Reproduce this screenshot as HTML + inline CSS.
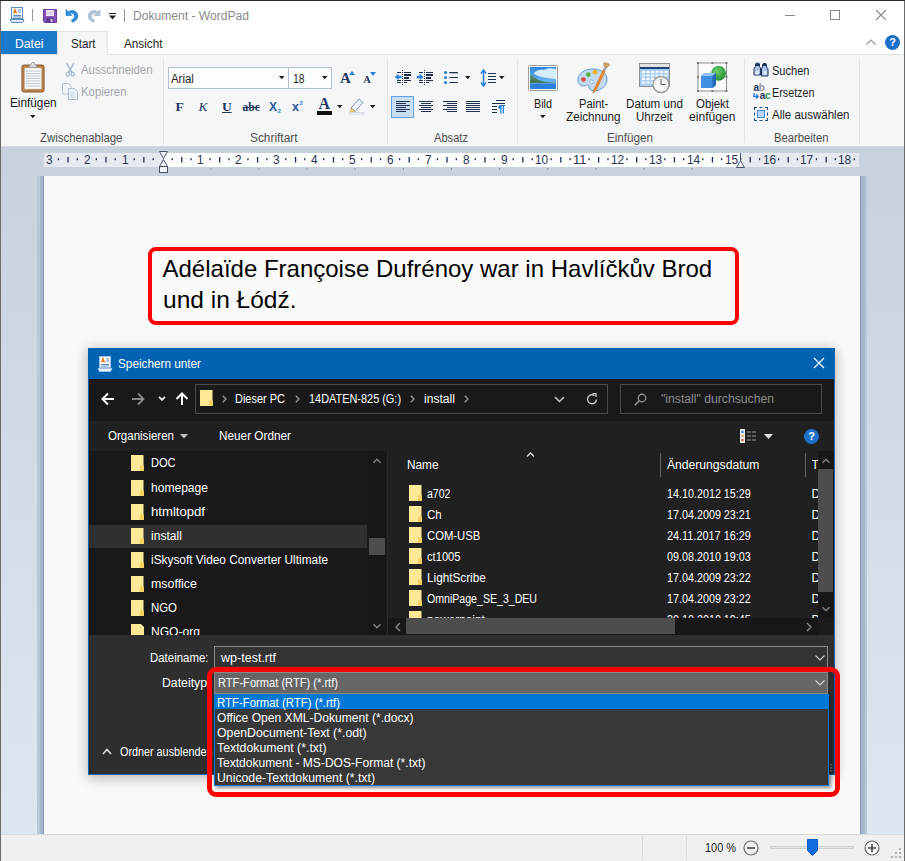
<!DOCTYPE html>
<html lang="de">
<head>
<meta charset="utf-8">
<title>Dokument - WordPad</title>
<style>
html,body{margin:0;padding:0;}
body{width:905px;height:861px;overflow:hidden;background:#fff;font-family:"Liberation Sans",sans-serif;font-size:12px;color:#1e1e1e;}
#w{position:relative;width:905px;height:861px;overflow:hidden;background:#fff;}
#w div,#w span,#w svg{position:absolute;}
.t{white-space:nowrap;line-height:1;}
.tb{left:1px;top:1px;width:903px;height:30px;background:#fff;}
.tabs{left:1px;top:31px;width:903px;height:23px;background:#fff;border-bottom:1px solid #e0e1e3;}
.rib{left:1px;top:55px;width:903px;height:91px;background:#f5f6f7;border-bottom:1px solid #d6d9dd;}
.sep{width:1px;background:#e4e5e7;top:58px;height:85px;}
.ws{left:1px;top:147px;width:903px;height:687px;background:linear-gradient(180deg,#c8d1dd 0%,#d2dde9 52%,#dce7f1 100%);}
.ruler{left:44px;top:153px;width:815px;height:14px;background:#e6eaf0;}
.ruler .in{left:119px;top:0;width:577px;height:14px;background:#fcfcfd;}
.page{left:44px;top:176px;width:816px;height:658px;background:#fafafa;box-sizing:border-box;border-left:1px solid #fff;border-right:1px solid #fff;}
.sb{left:1px;top:834px;width:903px;height:26px;background:#f0f0f0;border-top:1px solid #d9d9d9;}
.red{border:4px solid #f00;border-radius:9px;box-sizing:border-box;}
.dlg{left:88px;top:348px;width:747px;height:427px;background:#191919;box-shadow:0 2px 12px 1px rgba(0,0,0,.28);}
.row{left:0;width:747px;}
.combo{box-sizing:border-box;border:1px solid #9a9a9a;}
</style>
</head>
<body>
<div id="w">
<div style="left:0;top:0;width:905px;height:861px;background:#6b6b6b;"></div><div style="left:0;top:0;width:905px;height:1px;background:#2b2b2b;"></div><div class="tb"></div><div class="tabs"></div><div class="rib"></div><svg style="left:9px;top:7px" width="16" height="16" viewBox="0 0 16 16">
<rect x="2.5" y="0.5" width="11" height="11" fill="#fdfdfd" stroke="#5b8fc4"/>
<path d="M1 12.5h14l-1.5 3h-11z" fill="#dfe9f5" stroke="#5b8fc4" stroke-width="1"/>
<path d="M4.5 6.5l1.5-4 1.5 4M5 5.2h2" stroke="#e8731a" stroke-width="1.2" fill="none"/>
<path d="M9 3h3M9 5h3M4 8.5h8M4 10h8" stroke="#5b8fc4" stroke-width="1"/></svg><div style="left:32px;top:9px;width:1px;height:12px;background:#9a9a9a"></div><svg style="left:43px;top:9px" width="14" height="14" viewBox="0 0 14 14">
<path d="M0.5 0.5h13v13h-12l-1-1z" fill="#8552b8" stroke="#6a3b9c"/>
<rect x="3" y="1" width="8" height="6" fill="#f3eefa"/><path d="M3.5 3h7M3.5 5h7" stroke="#c9b6e2" stroke-width="1"/>
<rect x="3.5" y="9" width="7" height="4.5" fill="#5d3590"/><rect x="7.5" y="10" width="2" height="3" fill="#d9caec"/></svg><svg style="left:65px;top:8px" width="15" height="15" viewBox="0 0 15 15">
<path d="M1 1.5v6h6l-2.2-2.2c2.2-1 4.6 0.4 4.6 2.9 0 1.8-1.2 3.2-3 3.8l1 2.3c3.200-.9 5.400-3.200 5.400-6.300 0-4.600-5.200-7-9.600-4.300z" fill="#2e8ede" stroke="#1f6fbf" stroke-width=".6"/></svg><svg style="left:86px;top:8px" width="15" height="15" viewBox="0 0 15 15">
<path d="M14 1.500v6h-6l2.200-2.200c-2.200-1-4.600 0.400-4.600 2.900 0 1.800 1.200 3.200 3 3.800l-1 2.300c-3.200-.9-5.400-3.200-5.400-6.300 0-4.600 5.200-7 9.600-4.300z" fill="#b4c3d6" stroke="#9db0c8" stroke-width=".6"/></svg><div style="left:109px;top:13px;width:7px;height:1px;background:#222"></div><svg style="left:108px;top:15px" width="9" height="5" viewBox="0 0 9 5"><path d="M1 0.500h7l-3.500 4z" fill="#222"/></svg><div style="left:124px;top:9px;width:1px;height:13px;background:#9a9a9a"></div><span class="t" style="left:132.5px;top:10.4px;font-size:12.5px;color:#8b8b8b;transform:scaleX(0.967);transform-origin:0 50%;">Dokument - WordPad</span><div style="left:785px;top:15px;width:10px;height:1px;background:#8a8a8a"></div><div style="left:830px;top:10px;width:8px;height:8px;border:1px solid #8a8a8a"></div><svg style="left:875px;top:9px" width="12" height="12" viewBox="0 0 12 12"><path d="M1 1l10 10M11 1L1 11" stroke="#8a8a8a" stroke-width="1.100"/></svg><div style="left:1px;top:31px;width:56px;height:23px;background:#1979ca"></div><div style="left:57px;top:31px;width:51px;height:24px;background:#f5f6f7;border:1px solid #e0e1e3;border-bottom:none;box-sizing:border-box"></div><span class="t" style="left:15.0px;top:37.6px;font-size:12px;color:#ffffff;transform:scaleX(1.017);transform-origin:0 50%;">Datei</span><span class="t" style="left:71.0px;top:37.6px;font-size:12px;color:#1e1e1e;transform:scaleX(0.967);transform-origin:0 50%;">Start</span><span class="t" style="left:124.0px;top:37.6px;font-size:12px;color:#1e1e1e;transform:scaleX(0.978);transform-origin:0 50%;">Ansicht</span><svg style="left:865px;top:38px" width="12" height="8" viewBox="0 0 12 8"><path d="M1.500 6.500l4.500-4.500 4.500 4.500" stroke="#9a9a9a" stroke-width="1.200" fill="none"/></svg><div style="left:884.5px;top:34.500px;width:15px;height:15px;border-radius:8px;background:#1b6fc9"></div><span class="t" style="left:889.3px;top:36.8px;font-size:11px;color:#fff;font-weight:bold;">?</span><div class="sep" style="left:163px"></div><div class="sep" style="left:387px"></div><div class="sep" style="left:517px"></div><div class="sep" style="left:744px"></div><div class="sep" style="left:859px"></div><span class="t" style="left:40.0px;top:131.6px;font-size:12px;color:#4f4f4f;transform:scaleX(0.951);transform-origin:0 50%;">Zwischenablage</span><span class="t" style="left:250.0px;top:131.6px;font-size:12px;color:#4f4f4f;transform:scaleX(0.989);transform-origin:0 50%;">Schriftart</span><span class="t" style="left:434.0px;top:131.6px;font-size:12px;color:#4f4f4f;transform:scaleX(0.927);transform-origin:0 50%;">Absatz</span><span class="t" style="left:607.0px;top:131.6px;font-size:12px;color:#4f4f4f;transform:scaleX(0.971);transform-origin:0 50%;">Einfügen</span><span class="t" style="left:773.5px;top:131.6px;font-size:12px;color:#4f4f4f;transform:scaleX(0.939);transform-origin:0 50%;">Bearbeiten</span><svg style="left:21px;top:61px" width="24" height="32" viewBox="0 0 26 32" preserveAspectRatio="none">
<rect x="1" y="4" width="24" height="27" rx="2" fill="#b98149" stroke="#8d5a2b"/>
<rect x="4" y="7" width="18" height="21" fill="#fbfbfb" stroke="#d0c8bd" stroke-width=".5"/>
<path d="M5 10h16M5 12.500h16M5 15h16M5 17.500h16M5 20h16M5 22.500h16M5 25h16" stroke="#b9c4d0" stroke-width="1"/>
<path d="M8 6.500l3-3.500 1-1.500h2l1 1.500 3 3.500z" fill="#d9dde2" stroke="#8a8f96" stroke-width=".8"/></svg><span class="t" style="left:9.5px;top:97.1px;font-size:12px;color:#1e1e1e;transform:scaleX(0.982);transform-origin:0 50%;">Einfügen</span><svg style="left:29.9px;top:115px" width="6" height="4" viewBox="0 0 6 4"><path d="M0 0h5.500l-2.750 3.300z" fill="#1a1a1a"/></svg><svg style="left:64.500px;top:62px" width="10.500" height="15" viewBox="0 0 13 16" preserveAspectRatio="none">
<path d="M2 1l7 11M11 1l-7 11" stroke="#a9bccf" stroke-width="1.800"/><circle cx="3.500" cy="13" r="2" fill="none" stroke="#a9bccf" stroke-width="1.500"/><circle cx="9.500" cy="13" r="2" fill="none" stroke="#a9bccf" stroke-width="1.500"/></svg><svg style="left:62px;top:83px" width="17" height="17" viewBox="0 0 17 17">
<path d="M0.500 0.500h6l2.500 2.500v8h-8.500z" fill="#f3f6f9" stroke="#b4c4d4"/>
<path d="M6.500 5.500h6l3 3v8h-9z" fill="#f3f6f9" stroke="#a9bccf"/><path d="M8 10h5M8 12h5M8 14h5" stroke="#c3d0dc"/></svg><span class="t" style="left:81.0px;top:64.1px;font-size:12px;color:#a3a7ad;transform:scaleX(0.948);transform-origin:0 50%;">Ausschneiden</span><span class="t" style="left:81.0px;top:86.1px;font-size:12px;color:#a3a7ad;transform:scaleX(0.947);transform-origin:0 50%;">Kopieren</span><div style="left:168px;top:67px;width:121px;height:22px;box-sizing:border-box;border:1px solid #b4c1d4;background:#fdfdfe"></div><div style="left:288px;top:67px;width:44px;height:22px;box-sizing:border-box;border:1px solid #b4c1d4;background:#fdfdfe"></div><span class="t" style="left:170.7px;top:72.5px;font-size:12px;color:#1e1e1e;transform:scaleX(0.949);transform-origin:0 50%;">Arial</span><span class="t" style="left:292.7px;top:72.5px;font-size:12px;color:#1e1e1e;transform:scaleX(0.868);transform-origin:0 50%;">18</span><svg style="left:279.2px;top:76px" width="6" height="4" viewBox="0 0 6 4"><path d="M0 0h5.500l-2.750 3.300z" fill="#1a1a1a"/></svg><svg style="left:322.2px;top:76px" width="6" height="4" viewBox="0 0 6 4"><path d="M0 0h5.500l-2.750 3.300z" fill="#1a1a1a"/></svg><span class="t" style="left:340.0px;top:71.1px;font-size:15px;color:#1f3864;font-family:'Liberation Serif',serif;font-weight:bold;">A</span><svg style="left:349px;top:71px" width="6" height="4" viewBox="0 0 6 4"><path d="M0 4h6l-3-4z" fill="#2e7fd6"/></svg><span class="t" style="left:363.3px;top:74.9px;font-size:10.5px;color:#1f3864;font-family:'Liberation Serif',serif;font-weight:bold;">A</span><svg style="left:370px;top:72px" width="6" height="4" viewBox="0 0 6 4"><path d="M0 0h6l-3 4z" fill="#2e7fd6"/></svg><span class="t" style="left:175.5px;top:100.4px;font-size:13.5px;color:#1f3864;font-family:'Liberation Serif',serif;font-weight:bold;">F</span><span class="t" style="left:198.5px;top:100.4px;font-size:13.5px;color:#1f3864;font-family:'Liberation Serif',serif;font-style:italic;">K</span><span class="t" style="left:222.0px;top:99.9px;font-size:13.5px;color:#1f3864;font-family:'Liberation Serif',serif;font-weight:bold;text-decoration:underline;">U</span><span class="t" style="left:242.5px;top:102.4px;font-size:11.5px;color:#1f3864;font-family:'Liberation Serif',serif;font-weight:bold;text-decoration:line-through;">abc</span><span class="t" style="left:269.0px;top:100.6px;font-size:12px;color:#2b5797;font-weight:bold;">X</span><span class="t" style="left:277.5px;top:107.6px;font-size:6px;color:#2e7fd6;font-weight:bold;">2</span><span class="t" style="left:292.0px;top:101.4px;font-size:12.5px;color:#2b5797;font-weight:bold;">x</span><span class="t" style="left:299.5px;top:99.6px;font-size:6px;color:#2e7fd6;font-weight:bold;">2</span><span class="t" style="left:318.5px;top:96.2px;font-size:16px;color:#1f3864;font-family:'Liberation Serif',serif;font-weight:bold;">A</span><div style="left:317px;top:111px;width:15px;height:4px;background:#111"></div><svg style="left:337px;top:104.8px" width="6" height="4" viewBox="0 0 6 4"><path d="M0 0h5.500l-2.750 3.300z" fill="#1a1a1a"/></svg><svg style="left:348px;top:97px" width="18" height="18" viewBox="0 0 18 18">
<path d="M3 11l8-9 4 3.500-8 9z" fill="#eef3f9" stroke="#7f98b5" stroke-width="1"/><path d="M3 11l4 3.500-4.500 1z" fill="#f2d36b" stroke="#b99a3a" stroke-width=".6"/>
<rect x="1" y="15.500" width="15" height="2.500" fill="#e9eef4" stroke="#c3ccd6" stroke-width=".6"/></svg><svg style="left:369.6px;top:104.8px" width="6" height="4" viewBox="0 0 6 4"><path d="M0 0h5.500l-2.750 3.300z" fill="#1a1a1a"/></svg><svg style="left:394px;top:70px" width="18" height="16" viewBox="0 0 18 16">
<g fill="#1f2f4f"><rect x="3" y="2" width="4" height="1"/><rect x="10" y="2" width="7" height="1"/><rect x="10" y="4" width="7" height="2"/><rect x="10" y="7" width="5" height="2"/>
<rect x="3" y="10" width="4" height="1"/><rect x="10" y="10" width="7" height="1"/><rect x="3" y="12" width="4" height="1"/><rect x="10" y="12" width="3" height="1"/>
<rect x="8" y="0" width="1" height="1"/><rect x="8" y="2" width="1" height="1"/><rect x="8" y="4" width="1" height="1"/><rect x="8" y="6" width="1" height="1"/><rect x="8" y="8" width="1" height="1"/><rect x="8" y="10" width="1" height="1"/><rect x="8" y="12" width="1" height="1"/><rect x="8" y="14" width="1" height="1"/></g>
<path d="M0.800 7l3.700-3.200v2h3v2.400h-3v2z" fill="#2e7fd6"/></svg><svg style="left:416px;top:70px" width="18" height="16" viewBox="0 0 18 16">
<g fill="#1f2f4f"><rect x="3" y="2" width="4" height="1"/><rect x="10" y="2" width="7" height="1"/><rect x="10" y="4" width="7" height="2"/><rect x="10" y="7" width="5" height="2"/>
<rect x="3" y="10" width="4" height="1"/><rect x="10" y="10" width="7" height="1"/><rect x="3" y="12" width="4" height="1"/><rect x="10" y="12" width="3" height="1"/>
<rect x="8" y="0" width="1" height="1"/><rect x="8" y="2" width="1" height="1"/><rect x="8" y="4" width="1" height="1"/><rect x="8" y="6" width="1" height="1"/><rect x="8" y="8" width="1" height="1"/><rect x="8" y="10" width="1" height="1"/><rect x="8" y="12" width="1" height="1"/><rect x="8" y="14" width="1" height="1"/></g>
<path d="M7.500 7l-3.700-3.200v2h-3v2.400h3v2z" fill="#2e7fd6"/></svg><svg style="left:443px;top:70px" width="16" height="15" viewBox="0 0 16 15">
<path d="M6.300 2.600h8.700M6.300 7.500h8.700M6.300 12.500h8.700" stroke="#1f2f4f" stroke-width="1.200"/>
<circle cx="2.500" cy="2.600" r="1.600" fill="#2e7fd6"/><circle cx="2.500" cy="7.500" r="1.600" fill="#2e7fd6"/><circle cx="2.500" cy="12.500" r="1.600" fill="#2e7fd6"/></svg><svg style="left:464.8px;top:76px" width="6" height="4" viewBox="0 0 6 4"><path d="M0 0h5.500l-2.750 3.300z" fill="#1a1a1a"/></svg><svg style="left:480px;top:69px" width="17" height="18" viewBox="0 0 17 18">
<g fill="#1f2f4f"><rect x="8" y="4" width="8" height="1"/><rect x="8" y="7" width="8" height="1"/><rect x="8" y="10" width="8" height="1"/><rect x="8" y="13" width="8" height="1"/></g>
<path d="M3.500 1.500v15" stroke="#1e7fe0" stroke-width="1.500"/><path d="M1 4.500l2.500-3.500 2.500 3.500M1 13.500l2.500 3.500 2.500-3.500" stroke="#1e7fe0" stroke-width="1.500" fill="none"/></svg><svg style="left:498.8px;top:76px" width="6" height="4" viewBox="0 0 6 4"><path d="M0 0h5.500l-2.750 3.300z" fill="#1a1a1a"/></svg><div style="left:391px;top:96px;width:23px;height:22px;box-sizing:border-box;border:1px solid #62a2e4;background:#c9def3"></div><svg style="left:396px;top:100px" width="14" height="14" viewBox="0 0 14 14"><rect x="0" y="1" width="14" height="1" fill="#1f2f4f"/><rect x="0" y="3" width="10" height="1" fill="#1f2f4f"/><rect x="0" y="5" width="14" height="1" fill="#1f2f4f"/><rect x="0" y="7" width="10" height="1" fill="#1f2f4f"/><rect x="0" y="9" width="14" height="1" fill="#1f2f4f"/><rect x="0" y="11" width="10" height="1" fill="#1f2f4f"/></svg><svg style="left:419px;top:100px" width="14" height="14" viewBox="0 0 14 14"><rect x="0" y="1" width="14" height="1" fill="#1f2f4f"/><rect x="2" y="3" width="10" height="1" fill="#1f2f4f"/><rect x="0" y="5" width="14" height="1" fill="#1f2f4f"/><rect x="2" y="7" width="10" height="1" fill="#1f2f4f"/><rect x="0" y="9" width="14" height="1" fill="#1f2f4f"/><rect x="2" y="11" width="10" height="1" fill="#1f2f4f"/></svg><svg style="left:443px;top:100px" width="14" height="14" viewBox="0 0 14 14"><rect x="0" y="1" width="14" height="1" fill="#1f2f4f"/><rect x="4" y="3" width="10" height="1" fill="#1f2f4f"/><rect x="0" y="5" width="14" height="1" fill="#1f2f4f"/><rect x="4" y="7" width="10" height="1" fill="#1f2f4f"/><rect x="0" y="9" width="14" height="1" fill="#1f2f4f"/><rect x="4" y="11" width="10" height="1" fill="#1f2f4f"/></svg><svg style="left:466px;top:100px" width="14" height="14" viewBox="0 0 14 14"><rect x="0" y="1" width="14" height="1" fill="#1f2f4f"/><rect x="0" y="3" width="14" height="1" fill="#1f2f4f"/><rect x="0" y="5" width="14" height="1" fill="#1f2f4f"/><rect x="0" y="7" width="14" height="1" fill="#1f2f4f"/><rect x="0" y="9" width="14" height="1" fill="#1f2f4f"/><rect x="0" y="11" width="14" height="1" fill="#1f2f4f"/></svg><svg style="left:492px;top:100px" width="14" height="14" viewBox="0 0 14 14">
<g fill="#1f2f4f"><rect x="4" y="0" width="9" height="1"/><rect x="0" y="3" width="13" height="1"/><rect x="0" y="6" width="5" height="1"/><rect x="0" y="9" width="5" height="1"/><rect x="0" y="12" width="5" height="1"/></g>
<path d="M9 5h4v1h-1v7.500h-1.300v-7.500h-1.200v7.500h-1.300v-4.500a2 2 0 0 1 0-4z" fill="#1e7fe0"/></svg><svg style="left:528px;top:65px" width="30" height="26" viewBox="0 0 30 26">
<defs><linearGradient id="sky" x1="0" y1="0" x2="0" y2="1"><stop offset="0" stop-color="#2d86e2"/><stop offset="1" stop-color="#8fcdf3"/></linearGradient>
<linearGradient id="hill" x1="0" y1="0" x2="0" y2="1"><stop offset="0" stop-color="#5f8f7c"/><stop offset="1" stop-color="#2f6a3c"/></linearGradient></defs>
<rect x="0.500" y="0.500" width="29" height="25" rx="1" fill="#fbfbfb" stroke="#9d9d9d"/>
<rect x="2" y="2" width="26" height="22" fill="url(#sky)"/>
<path d="M6 8c2-3 7-4 10-3 3-2.500 9-2 12-1v10c-6-1-12-1-16-2.500s-6-2-6-3.500z" fill="#e3f5fb" opacity=".9"/>
<path d="M2 11c2-1 3.500 0 5 1.500s4 3 7 3.800 8 1.200 14 1.200v1.500h-26z" fill="url(#hill)"/>
<rect x="2" y="18" width="26" height="6" fill="#2b7fdc"/><path d="M2 18.300h26" stroke="#7fb5e6" stroke-width=".7"/></svg><span class="t" style="left:533.5px;top:98.1px;font-size:12px;color:#1e1e1e;transform:scaleX(0.899);transform-origin:0 50%;">Bild</span><svg style="left:539.8px;top:115px" width="6" height="4" viewBox="0 0 6 4"><path d="M0 0h5.500l-2.750 3.300z" fill="#1a1a1a"/></svg><svg style="left:577px;top:62px" width="34" height="32" viewBox="0 0 34 32">
<path d="M16 7C7 7 1 12 1 18c0 4 2.500 6 5.500 6 2.500 0 2.500-1.500 4-1 1.500.5 1 3 2.500 4.500 2 2 6 1.500 9 .5 5-2 8-6 8-11 0-6-6-10-14-10z" fill="#c3daf0" stroke="#5f9bd6" stroke-width="1"/>
<circle cx="6.500" cy="17.500" r="2.300" fill="#e2453c"/><circle cx="11.300" cy="12.600" r="2.300" fill="#57b13d"/><circle cx="18" cy="10.200" r="2.400" fill="#f2b01e"/>
<circle cx="14.600" cy="19.800" r="1.900" fill="#fafcfe" stroke="#5f9bd6" stroke-width=".7"/>
<path d="M16 31.500l1.200-4.500 8.800-19 2.200 1-8.800 19z" fill="#ee8a2a" stroke="#c86a14" stroke-width=".5"/>
<path d="M26 8l1.300-3 2.200 1-1.300 3z" fill="#9aa3ad"/><path d="M27.300 5l-.8-4c2-.8 5 0 6.500 2l-3.500 3z" fill="#c9a574" stroke="#a07a48" stroke-width=".4"/></svg><span class="t" style="left:578.6px;top:98.1px;font-size:12px;color:#1e1e1e;transform:scaleX(0.931);transform-origin:0 50%;">Paint-</span><span class="t" style="left:566.2px;top:111.3px;font-size:12px;color:#1e1e1e;transform:scaleX(0.974);transform-origin:0 50%;">Zeichnung</span><svg style="left:639px;top:63px" width="32" height="31" viewBox="0 0 32 31">
<rect x="0.500" y="0.500" width="30" height="23" fill="#a9cff5" stroke="#8e8e8e"/>
<rect x="1" y="1" width="29" height="3" fill="#e4e4e4"/><rect x="1" y="4" width="29" height="2" fill="#1f3f7a"/>
<g fill="#fdfeff"><rect x="3" y="8" width="3" height="2"/><rect x="7.500" y="8" width="3" height="2"/><rect x="12" y="8" width="3" height="2"/><rect x="16.500" y="8" width="3" height="2"/><rect x="21" y="8" width="3" height="2"/><rect x="25.500" y="8" width="3" height="2"/>
<rect x="3" y="11.500" width="3" height="2"/><rect x="7.500" y="11.500" width="3" height="2"/><rect x="12" y="11.500" width="3" height="2"/><rect x="16.500" y="11.500" width="3" height="2"/><rect x="21" y="11.500" width="3" height="2"/><rect x="25.500" y="11.500" width="3" height="2"/>
<rect x="3" y="15" width="3" height="2"/><rect x="7.500" y="15" width="3" height="2"/><rect x="12" y="15" width="3" height="2"/>
<rect x="3" y="18.500" width="3" height="2"/><rect x="7.500" y="18.500" width="3" height="2"/><rect x="12" y="18.500" width="3" height="2"/></g>
<circle cx="22" cy="21.500" r="8" fill="#f6f6f6" stroke="#9a9a9a" stroke-width="1.400"/><circle cx="22" cy="21.500" r="6" fill="none" stroke="#d5d5d5" stroke-width=".8" stroke-dasharray=".8 2.300"/>
<path d="M22 16v5.500h4.500" stroke="#555" stroke-width="1" fill="none"/></svg><span class="t" style="left:626.0px;top:98.1px;font-size:12px;color:#1e1e1e;transform:scaleX(0.971);transform-origin:0 50%;">Datum und</span><span class="t" style="left:636.0px;top:111.3px;font-size:12px;color:#1e1e1e;transform:scaleX(0.960);transform-origin:0 50%;">Uhrzeit</span><svg style="left:696px;top:61px" width="33" height="32" viewBox="0 0 33 32">
<defs><radialGradient id="sph" cx=".4" cy=".35" r=".7"><stop offset="0" stop-color="#6fcf6a"/><stop offset="1" stop-color="#1f8a2f"/></radialGradient></defs>
<rect x="2" y="2" width="28.500" height="28" fill="#fcfcfc" stroke="#8c8c8c" stroke-width="1"/>
<g fill="#7a7a7a"><rect x="1" y="1" width="2" height="2"/><rect x="29.500" y="1" width="2" height="2"/><rect x="1" y="29" width="2" height="2"/><rect x="29.500" y="29" width="2" height="2"/><rect x="15.500" y="1" width="2" height="2"/><rect x="15.500" y="29" width="2" height="2"/><rect x="1" y="15" width="2" height="2"/><rect x="29.500" y="15" width="2" height="2"/></g>
<circle cx="22.500" cy="12.200" r="7.500" fill="url(#sph)"/>
<path d="M5 15l3.500-3h11.500v12l-3.500 3h-11.500z" fill="#3f8fe3"/><path d="M5 15l3.500-3h11.500l-3.500 3z" fill="#8ec3f5"/><path d="M16.500 15l3.500-3v12l-3.500 3z" fill="#2467b5"/></svg><span class="t" style="left:695.5px;top:98.1px;font-size:12px;color:#1e1e1e;transform:scaleX(0.951);transform-origin:0 50%;">Objekt</span><span class="t" style="left:689.0px;top:111.3px;font-size:12px;color:#1e1e1e;transform:scaleX(1.010);transform-origin:0 50%;">einfügen</span><svg style="left:753px;top:62px" width="16" height="15" viewBox="0 0 16 15">
<path d="M1 6.500l1.500-2v-2.500l1-1h2l1 1v2.500l1 1.500v7h-6.500z" fill="#a9c2e6" stroke="#1f3560" stroke-width="1"/>
<path d="M8.500 6.500l1-1.500v-2.500l1-1h2l1 1v2.500l1.500 2v7h-6.500z" fill="#a9c2e6" stroke="#1f3560" stroke-width="1"/>
<rect x="2.500" y="1.500" width="3.500" height="2.500" fill="#1f3560"/><rect x="10" y="1.500" width="3.500" height="2.500" fill="#1f3560"/>
<rect x="2.500" y="9" width="3" height="3.500" fill="#e4eefb"/><rect x="10.500" y="9" width="3" height="3.500" fill="#e4eefb"/></svg><span class="t" style="left:772.0px;top:64.6px;font-size:12px;color:#1e1e1e;transform:scaleX(0.921);transform-origin:0 50%;">Suchen</span><span class="t" style="left:753.5px;top:83.3px;font-size:10px;color:#1f3560;font-weight:bold;">a</span><span class="t" style="left:758.8px;top:83.3px;font-size:10px;color:#9a9a9a;font-weight:bold;">b</span><span class="t" style="left:759.8px;top:90.9px;font-size:10px;color:#1f3560;font-weight:bold;">a</span><span class="t" style="left:765.0px;top:90.9px;font-size:10px;color:#2a9a3a;font-weight:bold;">c</span><svg style="left:753px;top:93px" width="7" height="7" viewBox="0 0 7 7"><path d="M1 0v3.500h4M3 1.500l2.200 2-2.200 2" stroke="#1e7fe0" stroke-width="1.300" fill="none"/></svg><span class="t" style="left:772.0px;top:86.6px;font-size:12px;color:#1e1e1e;transform:scaleX(0.897);transform-origin:0 50%;">Ersetzen</span><div style="left:754px;top:107px;width:14px;height:14px;box-sizing:border-box;border:1px dashed #1f4f8f"></div><div style="left:757px;top:110px;width:8px;height:8px;background:#b9d6f5;border:1px solid #3b8be0;box-sizing:border-box"></div><span class="t" style="left:772.0px;top:108.6px;font-size:12px;color:#1e1e1e;transform:scaleX(0.960);transform-origin:0 50%;">Alle auswählen</span><div class="ws"></div><div class="ruler"><div class="in"></div></div><svg style="left:44px;top:153px" width="815" height="14" viewBox="0 0 815 14"><rect x="13.8" y="5.200" width="1.300" height="2" fill="#1f3050"/><rect x="23.4" y="4" width="1.300" height="5.500" fill="#1f3050"/><rect x="32.7" y="5.200" width="1.300" height="2" fill="#1f3050"/><rect x="51.7" y="5.200" width="1.300" height="2" fill="#1f3050"/><rect x="61.3" y="4" width="1.300" height="5.500" fill="#1f3050"/><rect x="70.6" y="5.200" width="1.300" height="2" fill="#1f3050"/><rect x="89.6" y="5.200" width="1.300" height="2" fill="#1f3050"/><rect x="99.2" y="4" width="1.300" height="5.500" fill="#1f3050"/><rect x="108.5" y="5.200" width="1.300" height="2" fill="#1f3050"/><rect x="127.5" y="5.200" width="1.300" height="2" fill="#1f3050"/><rect x="137.1" y="4" width="1.300" height="5.500" fill="#1f3050"/><rect x="146.4" y="5.200" width="1.300" height="2" fill="#1f3050"/><rect x="165.4" y="5.200" width="1.300" height="2" fill="#1f3050"/><rect x="175.0" y="4" width="1.300" height="5.500" fill="#1f3050"/><rect x="184.3" y="5.200" width="1.300" height="2" fill="#1f3050"/><rect x="203.3" y="5.200" width="1.300" height="2" fill="#1f3050"/><rect x="212.9" y="4" width="1.300" height="5.500" fill="#1f3050"/><rect x="222.2" y="5.200" width="1.300" height="2" fill="#1f3050"/><rect x="241.2" y="5.200" width="1.300" height="2" fill="#1f3050"/><rect x="250.9" y="4" width="1.300" height="5.500" fill="#1f3050"/><rect x="260.1" y="5.200" width="1.300" height="2" fill="#1f3050"/><rect x="279.1" y="5.200" width="1.300" height="2" fill="#1f3050"/><rect x="288.8" y="4" width="1.300" height="5.500" fill="#1f3050"/><rect x="298.0" y="5.200" width="1.300" height="2" fill="#1f3050"/><rect x="317.0" y="5.200" width="1.300" height="2" fill="#1f3050"/><rect x="326.6" y="4" width="1.300" height="5.500" fill="#1f3050"/><rect x="335.9" y="5.200" width="1.300" height="2" fill="#1f3050"/><rect x="354.9" y="5.200" width="1.300" height="2" fill="#1f3050"/><rect x="364.5" y="4" width="1.300" height="5.500" fill="#1f3050"/><rect x="373.8" y="5.200" width="1.300" height="2" fill="#1f3050"/><rect x="392.8" y="5.200" width="1.300" height="2" fill="#1f3050"/><rect x="402.4" y="4" width="1.300" height="5.500" fill="#1f3050"/><rect x="411.7" y="5.200" width="1.300" height="2" fill="#1f3050"/><rect x="430.7" y="5.200" width="1.300" height="2" fill="#1f3050"/><rect x="440.3" y="4" width="1.300" height="5.500" fill="#1f3050"/><rect x="449.6" y="5.200" width="1.300" height="2" fill="#1f3050"/><rect x="468.6" y="5.200" width="1.300" height="2" fill="#1f3050"/><rect x="478.2" y="4" width="1.300" height="5.500" fill="#1f3050"/><rect x="487.5" y="5.200" width="1.300" height="2" fill="#1f3050"/><rect x="506.5" y="5.200" width="1.300" height="2" fill="#1f3050"/><rect x="516.1" y="4" width="1.300" height="5.500" fill="#1f3050"/><rect x="525.4" y="5.200" width="1.300" height="2" fill="#1f3050"/><rect x="544.4" y="5.200" width="1.300" height="2" fill="#1f3050"/><rect x="554.0" y="4" width="1.300" height="5.500" fill="#1f3050"/><rect x="563.3" y="5.200" width="1.300" height="2" fill="#1f3050"/><rect x="582.3" y="5.200" width="1.300" height="2" fill="#1f3050"/><rect x="592.0" y="4" width="1.300" height="5.500" fill="#1f3050"/><rect x="601.2" y="5.200" width="1.300" height="2" fill="#1f3050"/><rect x="620.2" y="5.200" width="1.300" height="2" fill="#1f3050"/><rect x="629.8" y="4" width="1.300" height="5.500" fill="#1f3050"/><rect x="639.1" y="5.200" width="1.300" height="2" fill="#1f3050"/><rect x="658.1" y="5.200" width="1.300" height="2" fill="#1f3050"/><rect x="667.8" y="4" width="1.300" height="5.500" fill="#1f3050"/><rect x="677.0" y="5.200" width="1.300" height="2" fill="#1f3050"/><rect x="696.0" y="5.200" width="1.300" height="2" fill="#1f3050"/><rect x="705.6" y="4" width="1.300" height="5.500" fill="#1f3050"/><rect x="714.9" y="5.200" width="1.300" height="2" fill="#1f3050"/><rect x="733.9" y="5.200" width="1.300" height="2" fill="#1f3050"/><rect x="743.5" y="4" width="1.300" height="5.500" fill="#1f3050"/><rect x="752.8" y="5.200" width="1.300" height="2" fill="#1f3050"/><rect x="771.8" y="5.200" width="1.300" height="2" fill="#1f3050"/><rect x="781.5" y="4" width="1.300" height="5.500" fill="#1f3050"/><rect x="790.7" y="5.200" width="1.300" height="2" fill="#1f3050"/><rect x="809.7" y="5.200" width="1.300" height="2" fill="#1f3050"/></svg><span class="t" style="left:45.7px;top:153.2px;font-size:13px;color:#2a3450;transform:scaleX(0.912);transform-origin:0 50%;">3</span><span class="t" style="left:83.6px;top:153.2px;font-size:13px;color:#2a3450;transform:scaleX(0.912);transform-origin:0 50%;">2</span><span class="t" style="left:121.5px;top:153.2px;font-size:13px;color:#2a3450;transform:scaleX(0.912);transform-origin:0 50%;">1</span><span class="t" style="left:197.3px;top:153.2px;font-size:13px;color:#2a3450;transform:scaleX(0.912);transform-origin:0 50%;">1</span><span class="t" style="left:235.2px;top:153.2px;font-size:13px;color:#2a3450;transform:scaleX(0.912);transform-origin:0 50%;">2</span><span class="t" style="left:273.1px;top:153.2px;font-size:13px;color:#2a3450;transform:scaleX(0.912);transform-origin:0 50%;">3</span><span class="t" style="left:311.0px;top:153.2px;font-size:13px;color:#2a3450;transform:scaleX(0.912);transform-origin:0 50%;">4</span><span class="t" style="left:348.9px;top:153.2px;font-size:13px;color:#2a3450;transform:scaleX(0.912);transform-origin:0 50%;">5</span><span class="t" style="left:386.8px;top:153.2px;font-size:13px;color:#2a3450;transform:scaleX(0.912);transform-origin:0 50%;">6</span><span class="t" style="left:424.7px;top:153.2px;font-size:13px;color:#2a3450;transform:scaleX(0.912);transform-origin:0 50%;">7</span><span class="t" style="left:462.6px;top:153.2px;font-size:13px;color:#2a3450;transform:scaleX(0.912);transform-origin:0 50%;">8</span><span class="t" style="left:500.5px;top:153.2px;font-size:13px;color:#2a3450;transform:scaleX(0.912);transform-origin:0 50%;">9</span><span class="t" style="left:535.1px;top:153.2px;font-size:13px;color:#2a3450;transform:scaleX(0.912);transform-origin:0 50%;">10</span><span class="t" style="left:573.0px;top:153.2px;font-size:13px;color:#2a3450;transform:scaleX(0.978);transform-origin:0 50%;">11</span><span class="t" style="left:610.9px;top:153.2px;font-size:13px;color:#2a3450;transform:scaleX(0.912);transform-origin:0 50%;">12</span><span class="t" style="left:648.8px;top:153.2px;font-size:13px;color:#2a3450;transform:scaleX(0.912);transform-origin:0 50%;">13</span><span class="t" style="left:686.7px;top:153.2px;font-size:13px;color:#2a3450;transform:scaleX(0.912);transform-origin:0 50%;">14</span><span class="t" style="left:724.6px;top:153.2px;font-size:13px;color:#2a3450;transform:scaleX(0.912);transform-origin:0 50%;">15</span><span class="t" style="left:762.5px;top:153.2px;font-size:13px;color:#2a3450;transform:scaleX(0.912);transform-origin:0 50%;">16</span><span class="t" style="left:800.4px;top:153.2px;font-size:13px;color:#2a3450;transform:scaleX(0.912);transform-origin:0 50%;">17</span><span class="t" style="left:838.3px;top:153.2px;font-size:13px;color:#2a3450;transform:scaleX(0.912);transform-origin:0 50%;">18</span><svg style="left:44px;top:168px" width="815" height="2" viewBox="0 0 815 2"><rect x="166.3" y="0" width="1" height="2" fill="#8e99ab"/><rect x="214.5" y="0" width="1" height="2" fill="#8e99ab"/><rect x="262.6" y="0" width="1" height="2" fill="#8e99ab"/><rect x="310.7" y="0" width="1" height="2" fill="#8e99ab"/><rect x="358.9" y="0" width="1" height="2" fill="#8e99ab"/><rect x="407.0" y="0" width="1" height="2" fill="#8e99ab"/><rect x="455.1" y="0" width="1" height="2" fill="#8e99ab"/><rect x="503.2" y="0" width="1" height="2" fill="#8e99ab"/><rect x="551.4" y="0" width="1" height="2" fill="#8e99ab"/><rect x="599.5" y="0" width="1" height="2" fill="#8e99ab"/><rect x="647.6" y="0" width="1" height="2" fill="#8e99ab"/></svg><svg style="left:159px;top:151px" width="10" height="23" viewBox="0 0 10 23">
<path d="M0.500 0.500h8l-4 7z" fill="#f4f6f9" stroke="#47536b"/><path d="M0.500 15.500l4-7 4 7z" fill="#f4f6f9" stroke="#47536b"/><rect x="0.500" y="15.500" width="8" height="6" fill="#f4f6f9" stroke="#47536b"/></svg><svg style="left:736px;top:152px" width="10" height="17" viewBox="0 0 10 17"><path d="M4.500 1v8" stroke="#47536b"/><path d="M0.500 15.500l4-7 4 7z" fill="#f4f6f9" stroke="#47536b"/></svg><div style="left:37px;top:176px;width:3px;height:658px;background:#b7c9d7"></div><div style="left:40px;top:176px;width:3px;height:658px;background:#a9b7cd"></div><div style="left:43px;top:176px;width:1px;height:658px;background:#8794aa"></div><div style="left:860px;top:176px;width:1px;height:658px;background:#8794aa"></div><div style="left:861px;top:176px;width:4px;height:658px;background:#a9b7cd"></div><div style="left:865px;top:176px;width:2px;height:658px;background:#b7c9d7"></div><div class="page"></div><span class="t" style="left:162.5px;top:257.0px;font-size:24px;color:#000;">Adélaïde Françoise Dufrénoy war in Havlíčkův Brod</span><span class="t" style="left:162.5px;top:287.8px;font-size:24px;color:#000;transform:scaleX(1.021);transform-origin:0 50%;">und in Łódź.</span><div class="red" style="left:148.300px;top:246.900px;width:590.500px;height:78.600px;border-width:4.800px;border-radius:8px"></div><div class="sb"></div><div style="left:642px;top:836px;width:1px;height:24px;background:#dcdcdc"></div><div style="left:686px;top:836px;width:1px;height:24px;background:#dcdcdc"></div><span class="t" style="left:705.0px;top:841.6px;font-size:12px;color:#1e1e1e;transform:scaleX(0.911);transform-origin:0 50%;">100 %</span><svg style="left:743px;top:840px" width="16" height="16" viewBox="0 0 16 16"><circle cx="8" cy="8" r="7" fill="#f4f4f4" stroke="#6b6b6b" stroke-width="1.200"/><path d="M4 8h8" stroke="#444" stroke-width="1.600"/></svg><div style="left:770px;top:846px;width:84px;height:3px;box-sizing:border-box;border:1px solid #d0d0d0;background:#e8e8e8"></div><svg style="left:807px;top:839px" width="11" height="17" viewBox="0 0 11 17"><path d="M0.500 0.500h10v11l-5 5-5-5z" fill="#0f6fe0" stroke="#0b5fc4"/></svg><svg style="left:864px;top:840px" width="16" height="16" viewBox="0 0 16 16"><circle cx="8" cy="8" r="7" fill="#f4f4f4" stroke="#6b6b6b" stroke-width="1.200"/><path d="M4 8h8M8 4v8" stroke="#444" stroke-width="1.600"/></svg><svg style="left:891px;top:848px" width="11" height="11" viewBox="0 0 11 11"><g fill="#b5b5b5"><rect x="8" y="0" width="2" height="2"/><rect x="4" y="4" width="2" height="2"/><rect x="8" y="4" width="2" height="2"/><rect x="0" y="8" width="2" height="2"/><rect x="4" y="8" width="2" height="2"/><rect x="8" y="8" width="2" height="2"/></g></svg><div class="dlg"></div><div style="left:88px;top:348px;width:747px;height:31px;background:#0063b1"></div><div style="left:89px;top:379px;width:745px;height:42px;background:#191919"></div><div style="left:89px;top:421px;width:745px;height:30px;background:#202020"></div><div style="left:89px;top:451px;width:298px;height:184px;background:#191919"></div><div style="left:387px;top:451px;width:1px;height:184px;background:#2b2b2b"></div><div style="left:388px;top:451px;width:446px;height:184px;background:#202020"></div><div style="left:89px;top:635px;width:745px;height:139px;background:#2e2e2e"></div><div style="left:88px;top:379px;width:1px;height:396px;background:#0063b1"></div><div style="left:834px;top:379px;width:1px;height:396px;background:#0063b1"></div><div style="left:88px;top:774px;width:747px;height:1px;background:#0063b1"></div><svg style="left:97px;top:356px" width="16" height="16" viewBox="0 0 16 16">
<rect x="2.500" y="0.500" width="11" height="11" fill="#fdfdfd" stroke="#9fc0e4"/>
<path d="M1 12.500h14l-1.500 3h-11z" fill="#e8f0fa" stroke="#9fc0e4" stroke-width="1"/>
<path d="M4.500 6.500l1.500-4 1.500 4M5 5.200h2" stroke="#e8731a" stroke-width="1.200" fill="none"/>
<path d="M9 3h3M9 5h3M4 8.500h8M4 10h8" stroke="#5b8fc4" stroke-width="1"/></svg><span class="t" style="left:118.0px;top:357.6px;font-size:12px;color:#fff;transform:scaleX(0.980);transform-origin:0 50%;">Speichern unter</span><svg style="left:813px;top:357px" width="12" height="12" viewBox="0 0 12 12"><path d="M1 1l10 10M11 1L1 11" stroke="#fff" stroke-width="1.200"/></svg><svg style="left:101px;top:392px" width="14" height="14" viewBox="0 0 14 14"><path d="M13 7h-11M7 1.500l-5.500 5.500 5.500 5.500" stroke="#fff" stroke-width="2" fill="none"/></svg><svg style="left:131px;top:392px" width="14" height="14" viewBox="0 0 14 14"><path d="M1 7h11M7 1.500l5.500 5.500-5.500 5.500" stroke="#8a8a8a" stroke-width="1.800" fill="none"/></svg><svg style="left:157.500px;top:396px" width="8" height="5" viewBox="0 0 8 5"><path d="M1 0.800l3 3 3-3" stroke="#f0f0f0" stroke-width="1.800" fill="none"/></svg><svg style="left:175px;top:392px" width="14" height="14" viewBox="0 0 14 14"><path d="M7 13v-11M1.500 7l5.500-5.500 5.500 5.500" stroke="#fff" stroke-width="2" fill="none"/></svg><div style="left:195px;top:384px;width:413px;height:30px;box-sizing:border-box;border:1px solid #4b4b4b;background:#191919"></div><svg style="left:200px;top:390px" width="13" height="16" viewBox="0 0 13 16"><path d="M0 0h12.500v16h-12.500z" fill="#ffe896"/><path d="M9 10.500h4v5.500h-4z" fill="#f3d060"/></svg><svg style="left:221.5px;top:395px" width="5" height="8" viewBox="0 0 5 8"><path d="M0.800 0.800l3.200 3.200-3.200 3.200" stroke="#9a9a9a" stroke-width="1.300" fill="none"/></svg><svg style="left:294.5px;top:395px" width="5" height="8" viewBox="0 0 5 8"><path d="M0.800 0.800l3.200 3.200-3.200 3.200" stroke="#9a9a9a" stroke-width="1.300" fill="none"/></svg><svg style="left:410px;top:395px" width="5" height="8" viewBox="0 0 5 8"><path d="M0.800 0.800l3.200 3.200-3.200 3.200" stroke="#9a9a9a" stroke-width="1.300" fill="none"/></svg><svg style="left:464px;top:395px" width="5" height="8" viewBox="0 0 5 8"><path d="M0.800 0.800l3.200 3.200-3.200 3.200" stroke="#9a9a9a" stroke-width="1.300" fill="none"/></svg><span class="t" style="left:234.5px;top:393.1px;font-size:12px;color:#fff;transform:scaleX(0.914);transform-origin:0 50%;">Dieser PC</span><span class="t" style="left:308.5px;top:393.1px;font-size:12px;color:#fff;transform:scaleX(0.910);transform-origin:0 50%;">14DATEN-825 (G:)</span><span class="t" style="left:424.0px;top:393.1px;font-size:12px;color:#fff;transform:scaleX(1.010);transform-origin:0 50%;">install</span><svg style="left:554px;top:396px" width="11" height="7" viewBox="0 0 11 7"><path d="M1 1l4.500 4.500 4.500-4.500" stroke="#c8c8c8" stroke-width="1.500" fill="none"/></svg><svg style="left:586px;top:393px" width="12" height="13" viewBox="0 0 12 13"><path d="M8.500 2.500a4.500 4.500 0 1 0 2 4" stroke="#c8c8c8" stroke-width="1.400" fill="none"/><path d="M6.500 0.500h3.500v3.500" stroke="#c8c8c8" stroke-width="1.400" fill="none"/></svg><div style="left:620px;top:384px;width:202px;height:30px;box-sizing:border-box;border:1px solid #4b4b4b;background:#191919"></div><svg style="left:634px;top:393px" width="13" height="13" viewBox="0 0 13 13"><circle cx="8" cy="5" r="3.800" stroke="#a0a0a0" stroke-width="1.200" fill="none"/><path d="M5.300 7.700l-4.500 4.500" stroke="#a0a0a0" stroke-width="1.300"/></svg><span class="t" style="left:661.0px;top:393.1px;font-size:12px;color:#8c8c8c;transform:scaleX(1.016);transform-origin:0 50%;">"install" durchsuchen</span><span class="t" style="left:107.5px;top:430.1px;font-size:12px;color:#fff;transform:scaleX(0.961);transform-origin:0 50%;">Organisieren</span><svg style="left:180px;top:434px" width="8" height="5" viewBox="0 0 8 5"><path d="M0 0h8l-4 4.500z" fill="#bdbdbd"/></svg><span class="t" style="left:218.5px;top:430.1px;font-size:12px;color:#fff;transform:scaleX(0.981);transform-origin:0 50%;">Neuer Ordner</span><svg style="left:740px;top:429px" width="17" height="14" viewBox="0 0 17 14"><rect x="0" y="0" width="5" height="14" fill="#e9e9e9"/>
<rect x="1.500" y="2" width="2" height="2" fill="#3b7dd8"/><rect x="1.500" y="6" width="2" height="2" fill="#e2a93a"/><rect x="1.500" y="10" width="2" height="2" fill="#d8433b"/>
<path d="M7 3h4M12 3h4M7 7h4M12 7h4M7 11h4M12 11h4" stroke="#9a9a9a" stroke-width="1"/></svg><svg style="left:764px;top:434px" width="9" height="5" viewBox="0 0 9 5"><path d="M0 0h9l-4.500 5z" fill="#e6e6e6"/></svg><div style="left:803.500px;top:428.500px;width:15px;height:15px;border-radius:8px;background:#1b6fc9"></div><span class="t" style="left:808.3px;top:430.8px;font-size:11px;color:#fff;font-weight:bold;">?</span><div style="left:89px;top:525px;width:278px;height:23px;background:#303030"></div><svg style="left:131px;top:455px" width="13" height="16" viewBox="0 0 13 16"><path d="M0 0h12.500v16h-12.500z" fill="#ffe896"/><path d="M9 10.500h4v5.500h-4z" fill="#f3d060"/></svg><svg style="left:131px;top:479.5px" width="13" height="16" viewBox="0 0 13 16"><path d="M0 0h12.500v16h-12.500z" fill="#ffe896"/><path d="M9 10.500h4v5.500h-4z" fill="#f3d060"/></svg><svg style="left:131px;top:503.5px" width="13" height="16" viewBox="0 0 13 16"><path d="M0 0h12.500v16h-12.500z" fill="#ffe896"/><path d="M9 10.500h4v5.500h-4z" fill="#f3d060"/></svg><svg style="left:131px;top:528px" width="13" height="16" viewBox="0 0 13 16"><path d="M0 0h12.500v16h-12.500z" fill="#ffe896"/><path d="M9 10.500h4v5.500h-4z" fill="#f3d060"/></svg><svg style="left:131px;top:552px" width="13" height="16" viewBox="0 0 13 16"><path d="M0 0h12.500v16h-12.500z" fill="#ffe896"/><path d="M9 10.500h4v5.500h-4z" fill="#f3d060"/></svg><svg style="left:131px;top:575.5px" width="13" height="16" viewBox="0 0 13 16"><path d="M0 0h12.500v16h-12.500z" fill="#ffe896"/><path d="M9 10.500h4v5.500h-4z" fill="#f3d060"/></svg><svg style="left:131px;top:600px" width="13" height="16" viewBox="0 0 13 16"><path d="M0 0h12.500v16h-12.500z" fill="#ffe896"/><path d="M9 10.500h4v5.500h-4z" fill="#f3d060"/></svg><svg style="left:131px;top:624px" width="13" height="11" viewBox="0 0 13 11"><path d="M0 0h10l3 3v8h-13z" fill="#ffe793"/></svg><span class="t" style="left:150.5px;top:457.1px;font-size:12px;color:#fff;transform:scaleX(0.919);transform-origin:0 50%;">DOC</span><span class="t" style="left:150.5px;top:481.6px;font-size:12px;color:#fff;transform:scaleX(1.005);transform-origin:0 50%;">homepage</span><span class="t" style="left:150.5px;top:505.6px;font-size:12px;color:#fff;transform:scaleX(1.094);transform-origin:0 50%;">htmltopdf</span><span class="t" style="left:150.5px;top:530.1px;font-size:12px;color:#fff;transform:scaleX(1.010);transform-origin:0 50%;">install</span><span class="t" style="left:150.5px;top:554.1px;font-size:12px;color:#fff;transform:scaleX(0.988);transform-origin:0 50%;">iSkysoft Video Converter Ultimate</span><span class="t" style="left:150.5px;top:577.6px;font-size:12px;color:#fff;transform:scaleX(1.034);transform-origin:0 50%;">msoffice</span><span class="t" style="left:150.5px;top:602.1px;font-size:12px;color:#fff;transform:scaleX(0.951);transform-origin:0 50%;">NGO</span><span class="t" style="left:150.5px;top:626.1px;font-size:12px;color:#fff;transform:scaleX(1.006);transform-origin:0 50%;">NGO-org</span><div style="left:89px;top:635px;width:299px;height:10px;background:#2e2e2e"></div><div style="left:369px;top:451px;width:17px;height:184px;background:#171717"></div><svg style="left:372px;top:458px" width="10" height="6" viewBox="0 0 10 6"><path d="M1.500 4.800l3.500-3.500 3.500 3.500" stroke="#808080" stroke-width="1.500" fill="none"/></svg><svg style="left:372px;top:623px" width="10" height="6" viewBox="0 0 10 6"><path d="M1.500 1.200l3.500 3.500 3.500-3.500" stroke="#808080" stroke-width="1.500" fill="none"/></svg><div style="left:369px;top:538px;width:16px;height:17px;background:#4d4d4d"></div><span class="t" style="left:406.5px;top:459.1px;font-size:12px;color:#fff;transform:scaleX(0.984);transform-origin:0 50%;">Name</span><svg style="left:526px;top:452px" width="9" height="5" viewBox="0 0 9 5"><path d="M1 4.500l3.500-3.500 3.500 3.500" stroke="#dcdcdc" stroke-width="1.300" fill="none"/></svg><div style="left:660px;top:453px;width:1px;height:24px;background:#636363"></div><div style="left:805px;top:453px;width:1px;height:24px;background:#636363"></div><span class="t" style="left:667.2px;top:459.1px;font-size:12px;color:#fff;transform:scaleX(1.011);transform-origin:0 50%;">Änderungsdatum</span><span class="t" style="left:811.5px;top:459.1px;font-size:12px;color:#fff;max-width:6.500px;overflow:hidden;">Typ</span><svg style="left:409px;top:485.2px" width="13" height="16" viewBox="0 0 13 16"><path d="M0 0h12.500v16h-12.500z" fill="#ffe896"/><path d="M9 10.500h4v5.500h-4z" fill="#f3d060"/></svg><span class="t" style="left:427.2px;top:487.8px;font-size:12px;color:#fff;transform:scaleX(0.880);transform-origin:0 50%;">a702</span><span class="t" style="left:667.2px;top:487.8px;font-size:12px;color:#fff;transform:scaleX(0.897);transform-origin:0 50%;">14.10.2012 15:29</span><span class="t" style="left:811.5px;top:487.8px;font-size:12px;color:#fff;max-width:6.500px;overflow:hidden;">Dateiordner</span><svg style="left:409px;top:506px" width="13" height="16" viewBox="0 0 13 16"><path d="M0 0h12.500v16h-12.500z" fill="#ffe896"/><path d="M9 10.500h4v5.500h-4z" fill="#f3d060"/></svg><span class="t" style="left:427.2px;top:508.6px;font-size:12px;color:#fff;transform:scaleX(0.952);transform-origin:0 50%;">Ch</span><span class="t" style="left:667.2px;top:508.6px;font-size:12px;color:#fff;transform:scaleX(0.897);transform-origin:0 50%;">17.04.2009 23:21</span><span class="t" style="left:811.5px;top:508.6px;font-size:12px;color:#fff;max-width:6.500px;overflow:hidden;">Dateiordner</span><svg style="left:409px;top:526.9px" width="13" height="16" viewBox="0 0 13 16"><path d="M0 0h12.500v16h-12.500z" fill="#ffe896"/><path d="M9 10.500h4v5.500h-4z" fill="#f3d060"/></svg><span class="t" style="left:427.2px;top:529.5px;font-size:12px;color:#fff;transform:scaleX(0.941);transform-origin:0 50%;">COM-USB</span><span class="t" style="left:667.2px;top:529.5px;font-size:12px;color:#fff;transform:scaleX(0.906);transform-origin:0 50%;">24.11.2017 16:29</span><span class="t" style="left:811.5px;top:529.5px;font-size:12px;color:#fff;max-width:6.500px;overflow:hidden;">Dateiordner</span><svg style="left:409px;top:548px" width="13" height="16" viewBox="0 0 13 16"><path d="M0 0h12.500v16h-12.500z" fill="#ffe896"/><path d="M9 10.500h4v5.500h-4z" fill="#f3d060"/></svg><span class="t" style="left:427.2px;top:550.6px;font-size:12px;color:#fff;transform:scaleX(0.930);transform-origin:0 50%;">ct1005</span><span class="t" style="left:667.2px;top:550.6px;font-size:12px;color:#fff;transform:scaleX(0.897);transform-origin:0 50%;">09.08.2010 19:03</span><span class="t" style="left:811.5px;top:550.6px;font-size:12px;color:#fff;max-width:6.500px;overflow:hidden;">Dateiordner</span><svg style="left:409px;top:569.3px" width="13" height="16" viewBox="0 0 13 16"><path d="M0 0h12.500v16h-12.500z" fill="#ffe896"/><path d="M9 10.500h4v5.500h-4z" fill="#f3d060"/></svg><span class="t" style="left:427.2px;top:571.9px;font-size:12px;color:#fff;transform:scaleX(0.979);transform-origin:0 50%;">LightScribe</span><span class="t" style="left:667.2px;top:571.9px;font-size:12px;color:#fff;transform:scaleX(0.897);transform-origin:0 50%;">17.04.2009 23:22</span><span class="t" style="left:811.5px;top:571.9px;font-size:12px;color:#fff;max-width:6.500px;overflow:hidden;">Dateiordner</span><svg style="left:409px;top:590.1px" width="13" height="16" viewBox="0 0 13 16"><path d="M0 0h12.500v16h-12.500z" fill="#ffe896"/><path d="M9 10.500h4v5.500h-4z" fill="#f3d060"/></svg><span class="t" style="left:427.2px;top:592.7px;font-size:12px;color:#fff;transform:scaleX(0.882);transform-origin:0 50%;">OmniPage_SE_3_DEU</span><span class="t" style="left:667.2px;top:592.7px;font-size:12px;color:#fff;transform:scaleX(0.897);transform-origin:0 50%;">17.04.2009 23:22</span><span class="t" style="left:811.5px;top:592.7px;font-size:12px;color:#fff;max-width:6.500px;overflow:hidden;">Dateiordner</span><svg style="left:409px;top:611.3px" width="13" height="16" viewBox="0 0 13 16"><path d="M0 0h12.500v16h-12.500z" fill="#ffe896"/><path d="M9 10.500h4v5.500h-4z" fill="#f3d060"/></svg><span class="t" style="left:427.2px;top:613.8px;font-size:12px;color:#fff;transform:scaleX(0.984);transform-origin:0 50%;">powerpoint</span><span class="t" style="left:667.2px;top:613.8px;font-size:12px;color:#fff;transform:scaleX(0.897);transform-origin:0 50%;">30.10.2010 19:45</span><span class="t" style="left:811.5px;top:613.8px;font-size:12px;color:#fff;max-width:6.500px;overflow:hidden;">Dateiordner</span><div style="left:818px;top:451px;width:16px;height:184px;background:#171717"></div><svg style="left:821px;top:458px" width="10" height="6" viewBox="0 0 10 6"><path d="M1.500 4.800l3.500-3.500 3.500 3.500" stroke="#808080" stroke-width="1.500" fill="none"/></svg><svg style="left:821px;top:606px" width="10" height="6" viewBox="0 0 10 6"><path d="M1.500 1.200l3.500 3.500 3.500-3.500" stroke="#808080" stroke-width="1.500" fill="none"/></svg><div style="left:818px;top:469px;width:15px;height:123px;background:#4d4d4d"></div><div style="left:388px;top:618px;width:430px;height:17px;background:#171717"></div><svg style="left:395px;top:622px" width="6" height="10" viewBox="0 0 6 10"><path d="M5 1l-4 4 4 4" stroke="#8a8a8a" stroke-width="1.400" fill="none"/></svg><svg style="left:806px;top:622px" width="6" height="10" viewBox="0 0 6 10"><path d="M1 1l4 4-4 4" stroke="#8a8a8a" stroke-width="1.400" fill="none"/></svg><div style="left:406px;top:618px;width:269px;height:16px;background:#4d4d4d"></div><div style="left:818px;top:618px;width:16px;height:17px;background:#1c1c1c"></div><span class="t" style="left:149.5px;top:651.6px;font-size:12px;color:#fff;transform:scaleX(0.953);transform-origin:0 50%;">Dateiname:</span><div class="combo" style="left:214px;top:646px;width:614px;height:22px;background:#333333;border-color:#8c8c8c"></div><span class="t" style="left:220.5px;top:651.6px;font-size:12px;color:#fff;transform:scaleX(1.044);transform-origin:0 50%;">wp-test.rtf</span><svg style="left:815px;top:655px" width="10" height="6" viewBox="0 0 10 6"><path d="M0.500 0.500l4.500 4.500 4.500-4.500" stroke="#d0d0d0" stroke-width="1.100" fill="none"/></svg><span class="t" style="left:162.0px;top:677.1px;font-size:12px;color:#fff;transform:scaleX(1.024);transform-origin:0 50%;">Dateityp:</span><div class="combo" style="left:214px;top:672px;width:614px;height:22px;background:#666666;border-color:#8a8a8a"></div><span class="t" style="left:218.0px;top:677.1px;font-size:12px;color:#fff;transform:scaleX(0.926);transform-origin:0 50%;">RTF-Format (RTF) (*.rtf)</span><svg style="left:815px;top:680px" width="10" height="6" viewBox="0 0 10 6"><path d="M0.500 0.500l4.500 4.500 4.500-4.500" stroke="#d8d8d8" stroke-width="1.100" fill="none"/></svg><svg style="left:102px;top:748px" width="10" height="7" viewBox="0 0 10 7"><path d="M1 6l4-4.500 4 4.500" stroke="#e0e0e0" stroke-width="1.500" fill="none"/></svg><span class="t" style="left:120.0px;top:746.1px;font-size:12px;color:#fff;transform:scaleX(0.900);transform-origin:0 50%;">Ordner ausblenden</span><svg style="left:827px;top:764px" width="6" height="9" viewBox="0 0 6 9"><g fill="#8a8a8a"><rect x="3" y="0" width="1.500" height="1.500"/><rect x="3" y="3" width="1.500" height="1.500"/><rect x="0" y="3" width="1.500" height="1.500"/><rect x="3" y="6" width="1.500" height="1.500"/><rect x="0" y="6" width="1.500" height="1.500"/></g></svg><div style="left:214px;top:694px;width:615px;height:92px;box-sizing:border-box;border:1px solid #0078d7;background:#383838;box-shadow:2px 2px 3px rgba(0,0,0,.4)"></div><div style="left:215px;top:695px;width:613px;height:14px;background:#0078d7"></div><span class="t" style="left:217.0px;top:696.6px;font-size:12px;color:#fff;transform:scaleX(0.949);transform-origin:0 50%;">RTF-Format (RTF) (*.rtf)</span><span class="t" style="left:217.0px;top:711.6px;font-size:12px;color:#fff;transform:scaleX(1.007);transform-origin:0 50%;">Office Open XML-Dokument (*.docx)</span><span class="t" style="left:217.0px;top:726.6px;font-size:12px;color:#fff;transform:scaleX(1.024);transform-origin:0 50%;">OpenDocument-Text (*.odt)</span><span class="t" style="left:217.0px;top:741.6px;font-size:12px;color:#fff;transform:scaleX(1.026);transform-origin:0 50%;">Textdokument (*.txt)</span><span class="t" style="left:217.0px;top:756.6px;font-size:12px;color:#fff;transform:scaleX(1.005);transform-origin:0 50%;">Textdokument - MS-DOS-Format (*.txt)</span><span class="t" style="left:217.0px;top:771.6px;font-size:12px;color:#fff;transform:scaleX(1.021);transform-origin:0 50%;">Unicode-Textdokument (*.txt)</span><div class="red" style="left:206.600px;top:666.600px;width:633.700px;height:130.300px;border-width:5px;border-radius:9px"></div>
</div>
</body>
</html>
